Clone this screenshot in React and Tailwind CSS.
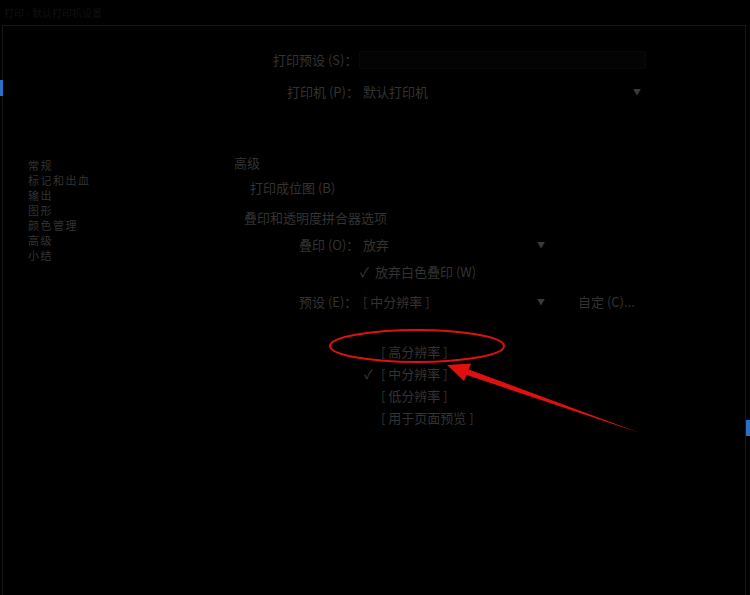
import React from "react";

const T = "text-[#333333] whitespace-nowrap";

function Caret({ className = "" }) {
  return <span className={`text-[8px] text-[#3a3a3a] ${className}`}>▼</span>;
}

export default function App() {
  const nav = ["常规", "标记和出血", "输出", "图形", "颜色管理", "高级", "小结"];
  const menu = [
    { t: "[ 高分辨率 ]", c: false },
    { t: "[ 中分辨率 ]", c: true },
    { t: "[ 低分辨率 ]", c: false },
    { t: "[ 用于页面预览 ]", c: false },
  ];
  return (
    <div
      className="relative w-[750px] h-[595px] bg-black overflow-hidden text-[13px] leading-[16px]"
      style={{ fontFamily: '"Noto Sans CJK SC", "Noto Sans", sans-serif' }}
    >
      {/* title strip */}
      <div className="h-[25px] flex items-center pl-[4px] text-[10px] text-[#111111]">打印 - 默认打印机设置</div>

      {/* dialog body */}
      <div className="relative mx-[2px] mr-[4px] h-[570px] border-t border-l border-r border-[#181818]">
        {/* top rows */}
        <div className="flex items-center pl-[270px] mt-[26px] h-[16px]">
          <span className={`${T} w-[86px] shrink-0`}>打印预设 (S)：</span>
          <div className="w-[287px] h-[18px] border border-[#080808] bg-[#040404]" />
        </div>
        <div className="flex items-center pl-[284px] mt-[16px] h-[16px]">
          <span className={`${T} w-[76px] shrink-0`}>打印机 (P)：</span>
          <span className={`${T} w-[270px]`}>默认打印机</span>
          <Caret />
        </div>

        <div className="flex mt-[55px]">
          {/* sidebar */}
          <div className="w-[231px] pl-[25px] pt-[3px] flex flex-col text-[11px] tracking-[1.5px]">
            {nav.map((n) => (
              <div key={n} className={`${T} h-[15px] leading-[15px]`}>{n}</div>
            ))}
          </div>

          {/* main */}
          <div className="flex-1 flex flex-col">
            <div className={T}>高级</div>
            <div className={`${T} ml-[16px] mt-[9px]`}>打印成位图 (B)</div>
            <div className={`${T} ml-[10px] mt-[14px]`}>叠印和透明度拼合器选项</div>

            <div className="flex items-center ml-[65px] mt-[11px]">
              <span className={`${T} w-[64px]`}>叠印 (O)：</span>
              <span className={`${T} w-[174px]`}>放弃</span>
              <Caret />
            </div>
            <div className="flex items-center ml-[126px] mt-[11px]">
              <span className="text-[#3a3a3a] w-[15px]">✓</span>
              <span className={T}>放弃白色叠印 (W)</span>
            </div>
            <div className="flex items-center ml-[65px] mt-[14px]">
              <span className={`${T} w-[64px]`}>预设 (E)：</span>
              <span className={`${T} w-[174px]`}>[ 中分辨率 ]</span>
              <Caret />
              <span className={`${T} ml-[33px]`}>自定 (C)...</span>
            </div>

            {/* dropdown menu */}
            <div className="flex flex-col ml-[130px] mt-[31px]">
              {menu.map((m) => (
                <div key={m.t} className="flex items-center h-[22px]">
                  <span className="w-[17px] text-[#3a3a3a]">{m.c ? "✓" : ""}</span>
                  <span className={T}>{m.t}</span>
                </div>
              ))}
            </div>
          </div>
        </div>
      </div>

      {/* edge highlights */}
      <div className="absolute left-0 top-[80px] w-[3px] h-[16px] bg-[#2a6fc9]" />
      <div className="absolute right-0 top-[420px] w-[4px] h-[16px] bg-[#2a6fc9]" />

      {/* annotation */}
      <svg className="absolute inset-0 pointer-events-none" width="750" height="595">
        <ellipse cx="417" cy="346" rx="87" ry="16" fill="none" stroke="#e01010" strokeWidth="2" />
        <polygon
          points="447,365 471,363.5 468.7,369.5 640,433 466.7,375.1 464,381"
          fill="#e01010"
        />
      </svg>
    </div>
  );
}
